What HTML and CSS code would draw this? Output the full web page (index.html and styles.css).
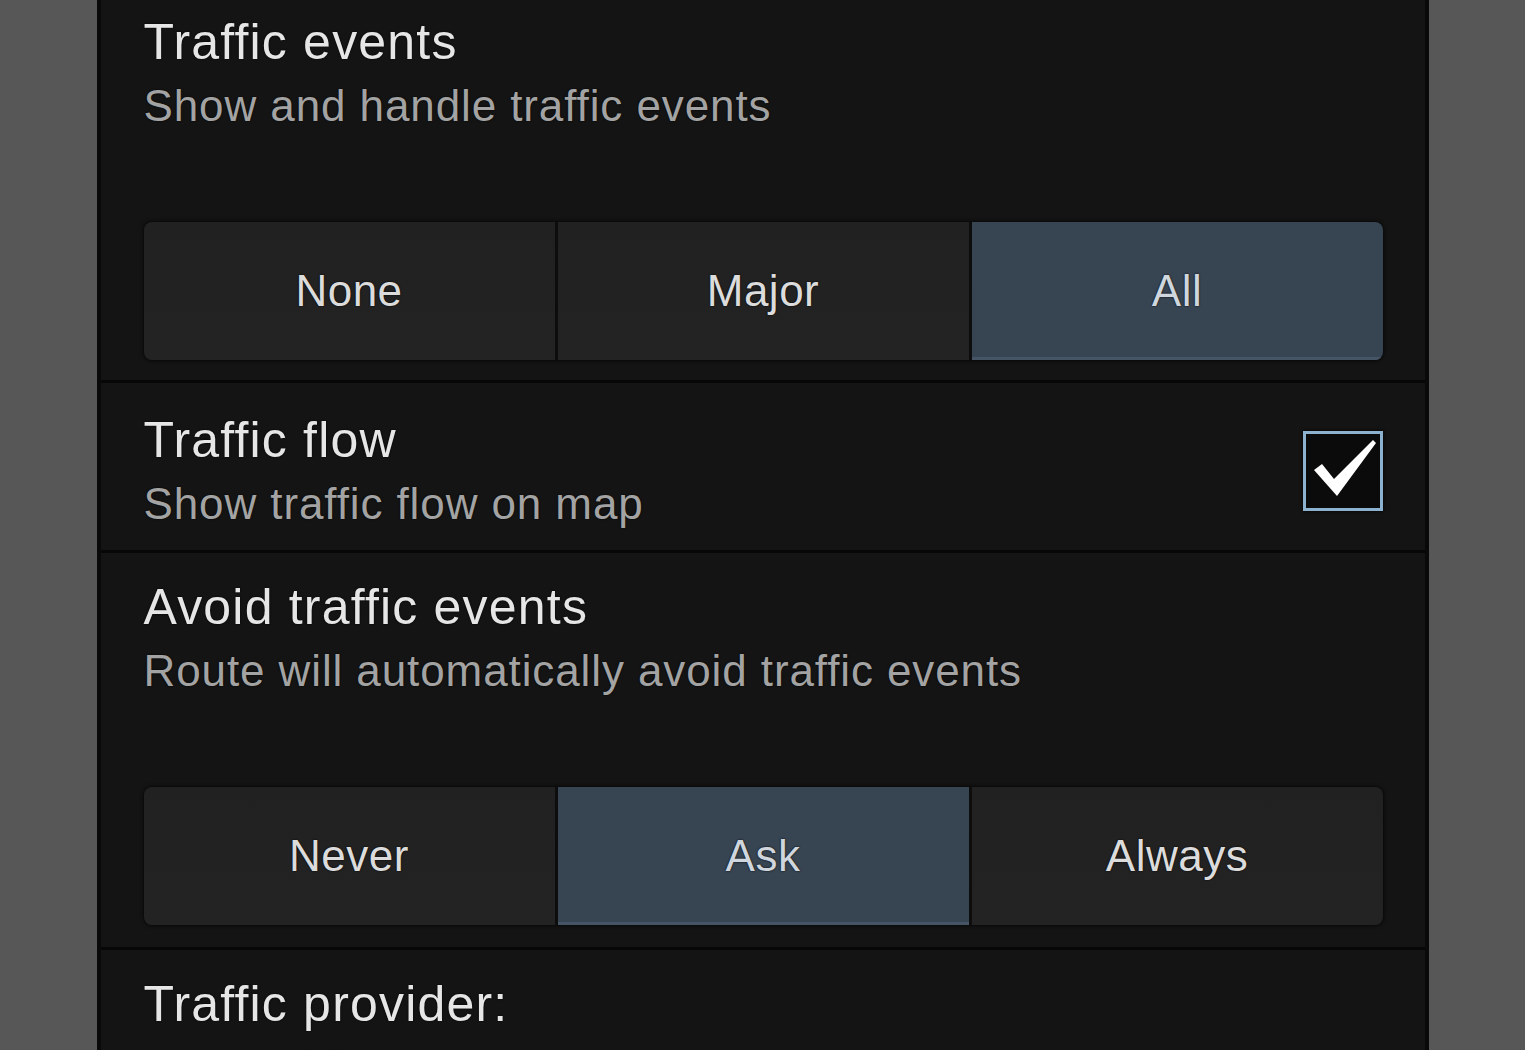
FILE: index.html
```html
<!DOCTYPE html>
<html lang="en">
<head>
    <meta charset="UTF-8">
    <meta name="viewport" content="width=device-width, initial-scale=1.0">
    <title>Traffic settings</title>
    <link rel="stylesheet" href="styles.css">
</head>
<body>
    <div class="panel">
        <div class="row row-first">
            <div class="title">Traffic events</div>
            <div class="subtitle">Show and handle traffic events</div>
            <div class="segments">
                <div class="segment">None</div>
                <div class="segment">Major</div>
                <div class="segment selected">All</div>
            </div>
        </div>
        <div class="row row-check">
            <div class="texts">
                <div class="title">Traffic flow</div>
                <div class="subtitle">Show traffic flow on map</div>
            </div>
            <div class="checkbox">
                <svg viewBox="0 0 74 74" width="74" height="74">
                    <path d="M8 36 L16 30 L28 45 L67 6 L70 9 L31 62 Z" fill="#ffffff"/>
                </svg>
            </div>
        </div>
        <div class="row">
            <div class="title">Avoid traffic events</div>
            <div class="subtitle">Route will automatically avoid traffic events</div>
            <div class="segments">
                <div class="segment">Never</div>
                <div class="segment selected">Ask</div>
                <div class="segment">Always</div>
            </div>
        </div>
        <div class="row">
            <div class="title">Traffic provider:</div>
            <div class="subtitle">No provider</div>
        </div>
    </div>
</body>
</html>
```

FILE: styles.css
```css
body {
    margin: 0;
    height: 100vh;
    overflow: hidden;
    background-color: #575757;
    font-family: "Liberation Sans", Arial, sans-serif;
    display: flex;
    justify-content: center;
}
.panel {
    width: 1324px;
    background-color: #141414;
    border-left: 4px solid #090909;
    border-right: 4px solid #090909;
}
.row {
    padding: 24px 42px 22px 43px;
    border-bottom: 3px solid #070707;
}
.row-first {
    padding-top: 12px;
    padding-bottom: 20px;
}
.row-check {
    display: flex;
    align-items: center;
    justify-content: space-between;
    padding-top: 27px;
    padding-bottom: 16px;
}
.title {
    font-size: 50px;
    line-height: 60px;
    letter-spacing: 1.2px;
    color: #e6e6e6;
    text-shadow: 0 0 2px #000;
}
.subtitle {
    margin-top: 4px;
    font-size: 44px;
    line-height: 60px;
    letter-spacing: 0.9px;
    color: #a3a3a3;
    text-shadow: 0 0 2px #000;
}
.segments {
    display: flex;
    gap: 3px;
    margin-top: 86px;
    height: 138px;
    background-color: #0d0d0d;
    border-radius: 8px;
    overflow: hidden;
    box-shadow: 0 0 4px #000;
}
.segment {
    flex: 1;
    display: flex;
    justify-content: center;
    align-items: center;
    font-size: 44px;
    letter-spacing: 0.5px;
    color: #dcdcdc;
    background: linear-gradient(#212121, #232323);
    text-shadow: 0 0 2px #000;
}
.segment.selected {
    background: #374452;
    color: #cfd6dd;
    box-shadow: inset 0 -3px 0 #465566;
}
.checkbox {
    width: 74px;
    height: 74px;
    margin-top: -3px;
    border: 3px solid #8db2cf;
    background-color: #0b0b0b;
    box-shadow: 0 0 3px #000;
}
.checkbox svg {
    display: block;
}
```
